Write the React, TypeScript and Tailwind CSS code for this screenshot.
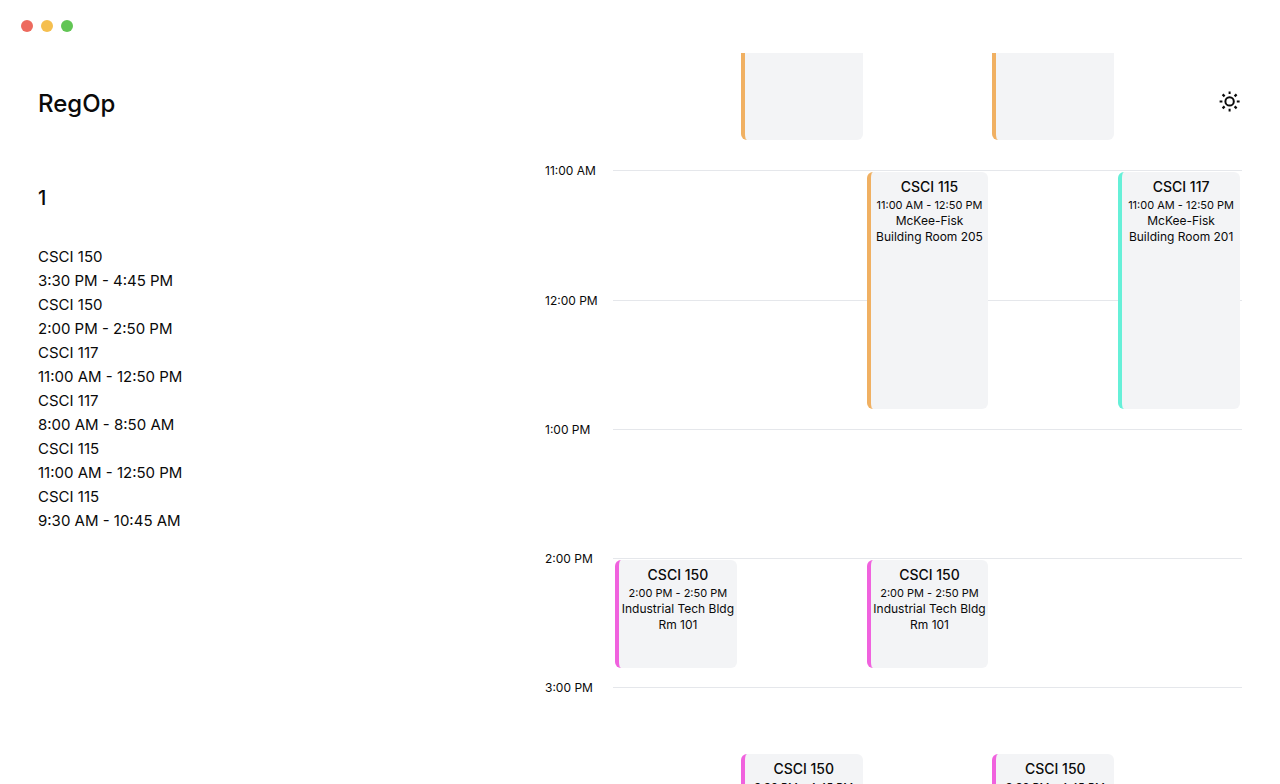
const START_HOUR = 10;
const HOURS = [10, 11, 12, 13, 14, 15, 16, 17];

type Meeting = {
  course: string;
  time: string;
  place: string;
  day: number;
  from: number;
  to: number;
  accent: string;
};

const ORANGE = "border-[#f0b062]";
const TEAL = "border-[#66f0d8]";
const PINK = "border-[#f062de]";

const MEETINGS: Meeting[] = [
  { course: "CSCI 115", time: "11:00 AM - 12:50 PM", place: "McKee-Fisk Building Room 205", day: 3, from: 660, to: 770, accent: ORANGE },
  { course: "CSCI 117", time: "11:00 AM - 12:50 PM", place: "McKee-Fisk Building Room 201", day: 5, from: 660, to: 770, accent: TEAL },
  { course: "CSCI 150", time: "2:00 PM - 2:50 PM", place: "Industrial Tech Bldg Rm 101", day: 1, from: 840, to: 890, accent: PINK },
  { course: "CSCI 150", time: "2:00 PM - 2:50 PM", place: "Industrial Tech Bldg Rm 101", day: 3, from: 840, to: 890, accent: PINK },
  { course: "CSCI 150", time: "3:30 PM - 4:45 PM", place: "Industrial Tech Bldg Rm 101", day: 2, from: 930, to: 1005, accent: PINK },
  { course: "CSCI 150", time: "3:30 PM - 4:45 PM", place: "Industrial Tech Bldg Rm 101", day: 4, from: 930, to: 1005, accent: PINK },
];

// Morning meetings that began before the first visible hour.
const CONTINUED = [
  { day: 2, to: 645 },
  { day: 4, to: 645 },
];

const SECTIONS = [
  ["CSCI 150", "3:30 PM - 4:45 PM"],
  ["CSCI 150", "2:00 PM - 2:50 PM"],
  ["CSCI 117", "11:00 AM - 12:50 PM"],
  ["CSCI 117", "8:00 AM - 8:50 AM"],
  ["CSCI 115", "11:00 AM - 12:50 PM"],
  ["CSCI 115", "9:30 AM - 10:45 AM"],
];

const hourLabel = (h: number) => `${h > 12 ? h - 12 : h}:00 ${h < 12 ? "AM" : "PM"}`;

// Grid rows are five minutes each.
const rowOf = (minutes: number) => (minutes - START_HOUR * 60) / 5 + 1;

function SunIcon() {
  return (
    <svg viewBox="0 0 24 24" className="size-6" fill="none" stroke="currentColor" strokeWidth="2" aria-hidden="true">
      <circle cx="11.6" cy="12.4" r="4.2" />
      <path d="M11.6 2.4v2.6M11.6 19.8v2.6M1.6 12.4h2.8M18.8 12.4h2.8" />
      <path d="M4.6 5.4l2 2M16.6 17.4l2 2M4.6 19.4l2-2M16.6 7.4l2-2" strokeWidth="2.2" />
    </svg>
  );
}

function TitleBar() {
  return (
    <div className="flex h-[53px] shrink-0 items-center gap-2 px-[21px] pb-0.5">
      <span className="size-3 rounded-full bg-[#ed6a5e]" />
      <span className="size-3 rounded-full bg-[#f5bf4f]" />
      <span className="size-3 rounded-full bg-[#61c554]" />
    </div>
  );
}

function Calendar() {
  return (
    <section aria-label="Weekly schedule" className="-mt-3 grid h-[1034px] grid-cols-[68px_1fr]">
      <div className="col-start-1 row-start-1 grid auto-rows-fr">
        {HOURS.map((h) => (
          <div key={h} className="-mt-[7px] text-xs leading-4">
            {h > START_HOUR && hourLabel(h)}
          </div>
        ))}
      </div>
      <div className="col-start-2 row-start-1 grid auto-rows-fr">
        {HOURS.map((h) => (
          <div key={h} className="border-t border-gray-200" />
        ))}
      </div>
      <div className="col-start-2 row-start-1 grid grid-cols-5 grid-rows-[repeat(96,minmax(0,1fr))]">
        {CONTINUED.map((c) => (
          <div
            key={c.day}
            className="mx-0.5 -mb-0.5 rounded-b-md border-l-4 border-[#f0b062] bg-gray-100"
            style={{ gridColumn: c.day, gridRow: `1 / ${rowOf(c.to)}` }}
          />
        ))}
        {MEETINGS.map((m) => (
          <article
            key={`${m.day}-${m.from}`}
            className={`mx-0.5 mt-0.5 -mb-0.5 overflow-hidden rounded-md border-l-4 bg-gray-100 px-0.5 pt-[5px] text-center text-xs leading-4 ${m.accent}`}
            style={{ gridColumn: m.day, gridRow: `${rowOf(m.from)} / ${rowOf(m.to)}` }}
          >
            <h3 className="text-sm leading-5 font-medium">{m.course}</h3>
            <p className="text-[11px]">{m.time}</p>
            <p>{m.place}</p>
          </article>
        ))}
      </div>
    </section>
  );
}

export default function App() {
  return (
    <div className="flex h-screen flex-col overflow-hidden bg-white font-['Inter',sans-serif] text-neutral-950">
      <TitleBar />
      <main className="relative grid min-h-0 flex-1 grid-cols-[507fr_697fr] overflow-hidden px-[38px]">
        <aside className="pt-[33px]">
          <h1 className="text-2xl leading-9 font-medium">RegOp</h1>
          <h2 className="mt-[62px] text-xl leading-7 font-medium">1</h2>
          <ul className="mt-[33px] text-[15px] leading-6">
            {SECTIONS.map(([course, time], i) => (
              <li key={i}>
                <p>{course}</p>
                <p>{time}</p>
              </li>
            ))}
          </ul>
        </aside>
        <Calendar />
        <button type="button" aria-label="Toggle theme" className="absolute top-9 right-[38px]">
          <SunIcon />
        </button>
      </main>
    </div>
  );
}
